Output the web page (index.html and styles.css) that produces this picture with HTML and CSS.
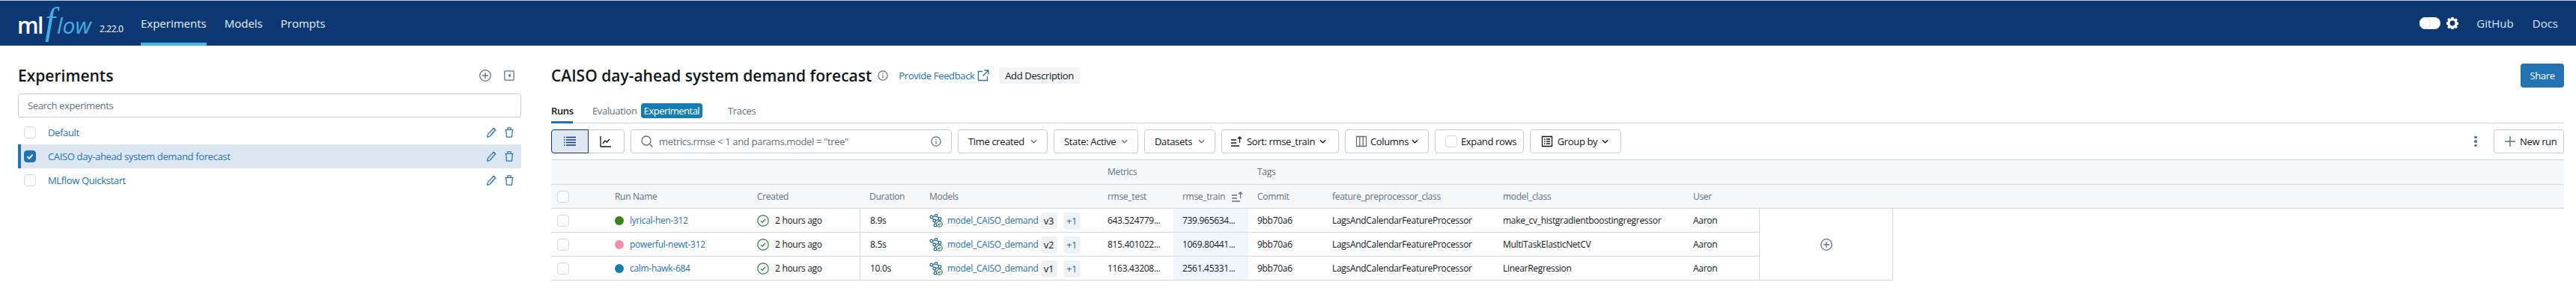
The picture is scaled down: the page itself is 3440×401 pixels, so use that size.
FILE: index.html
```html
<!DOCTYPE html>
<html lang="en">
<head>
<meta charset="utf-8">
<title>MLflow</title>
<link rel="stylesheet" href="styles.css">
</head>
<body>
<header class="topbar">
  <div class="logo"><span class="logo-ml">ml</span><span class="logo-f">f</span><span class="logo-low">low</span></div>
  <span class="version">2.22.0</span>
  <nav class="nav">
    <a class="nav-item active">Experiments</a>
    <a class="nav-item">Models</a>
    <a class="nav-item">Prompts</a>
  </nav>
  <div class="top-right">
    <span class="toggle"><span class="knob"></span></span>
    <svg class="gear" viewBox="0 0 16 16"><path fill="#fff" fill-rule="evenodd" d="M6.6 0h2.8l.4 2 1.3.6 1.8-1.1 2 2-1.1 1.8.6 1.3 2 .4v2.8l-2 .4-.6 1.3 1.1 1.8-2 2-1.800-1.100-1.300.6-.4 2H6.600l-.4-2-1.300-.6-1.800 1.100-2-2 1.100-1.800-.6-1.300-2-.4V6.600l2-.4.6-1.300L1.100 3.100l2-2 1.800 1.100 1.300-.6zM8 4.600a3.400 3.400 0 1 0 0 6.800 3.400 3.400 0 0 0 0-6.800z"/></svg>
    <a class="top-link github">GitHub</a>
    <a class="top-link">Docs</a>
  </div>
</header>
<div class="page">
  <aside class="sidebar">
    <div class="side-head">
      <h2 class="side-title">Experiments</h2>
      <svg class="icon16 grey" viewBox="0 0 16 16"><circle cx="8" cy="8" r="7.300"/><path d="M8 4v8M4 8h8"/></svg>
      <svg class="icon14 grey collapse" viewBox="0 0 16 16"><rect x="1" y="1" width="14" height="14" rx="1"/><path class="solid" d="M10 4.800v6.400L6.200 8z"/></svg>
    </div>
    <div class="side-search">Search experiments</div>
    <div class="exp-row"><span class="check"></span><a class="exp-name">Default</a><svg class="icon14 blue" viewBox="0 0 16 16"><path d="M11.500 1.500l3 2.500-8.500 10-4 1.500.5-4z"/></svg><svg class="icon14 blue" viewBox="0 0 16 16"><path d="M1.500 4h13M5.500 4V1h5v3M3 4l1 11h8l1-11"/></svg></div>
    <div class="exp-row selected"><span class="check on"><svg viewBox="0 0 16 16"><path d="M4 8.300l3 3 5-6"/></svg></span><a class="exp-name">CAISO day-ahead system demand forecast</a><svg class="icon14 blue" viewBox="0 0 16 16"><path d="M11.500 1.500l3 2.500-8.500 10-4 1.500.5-4z"/></svg><svg class="icon14 blue" viewBox="0 0 16 16"><path d="M1.500 4h13M5.500 4V1h5v3M3 4l1 11h8l1-11"/></svg></div>
    <div class="exp-row"><span class="check"></span><a class="exp-name">MLflow Quickstart</a><svg class="icon14 blue" viewBox="0 0 16 16"><path d="M11.500 1.500l3 2.500-8.500 10-4 1.500.5-4z"/></svg><svg class="icon14 blue" viewBox="0 0 16 16"><path d="M1.500 4h13M5.500 4V1h5v3M3 4l1 11h8l1-11"/></svg></div>
  </aside>
  <main class="main">
    <div class="title-row">
      <h1 class="title">CAISO day-ahead system demand forecast</h1>
      <svg class="icon14 grey info" viewBox="0 0 16 16"><circle cx="8" cy="8" r="7"/><path d="M8 7v5M8 4v1.600"/></svg>
      <a class="feedback">Provide Feedback</a>
      <svg class="icon16 blue ext" viewBox="0 0 16 16"><path d="M7 2.500H1.500v12h12V9M9.500 1h5.500v5.500M15 1L7.500 8.500"/></svg>
      <span class="add-desc">Add Description</span>
      <span class="share">Share</span>
    </div>
    <div class="tabs">
      <span class="tab active">Runs</span>
      <span class="tab eval">Evaluation</span><span class="badge">Experimental</span>
      <span class="tab traces">Traces</span>
    </div>
    <div class="toolbar">
      <div class="segment">
        <span class="seg on"><svg class="icon16 navy" viewBox="0 0 16 16"><path d="M0 2.500h1.500M3 2.500h13M0 6h1.500M3 6h13M0 9.500h1.500M3 9.500h13M0 13h1.500M3 13h13"/></svg></span>
        <span class="seg"><svg class="icon16 dark" viewBox="0 0 16 16"><path d="M1 1v14h14M4 11l3-4 2.500 2L13 5"/></svg></span>
      </div>
      <div class="run-search">
        <svg class="icon16 grey" viewBox="0 0 16 16"><circle cx="7" cy="7" r="6"/><path d="M11.500 11.500L15.500 15.500"/></svg>
        <span class="placeholder">metrics.rmse &lt; 1 and params.model = "tree"</span>
        <svg class="icon14 grey" viewBox="0 0 16 16"><circle cx="8" cy="8" r="7"/><path d="M8 7v5M8 4v1.600"/></svg>
      </div>
      <span class="btn w-time">Time created<svg class="chev light" viewBox="0 0 10 6"><path d="M1 1l4 4 4-4"/></svg></span>
      <span class="btn w-state">State: Active<svg class="chev light" viewBox="0 0 10 6"><path d="M1 1l4 4 4-4"/></svg></span>
      <span class="btn w-data">Datasets<svg class="chev light" viewBox="0 0 10 6"><path d="M1 1l4 4 4-4"/></svg></span>
      <span class="btn w-sort"><svg class="icon16 dark" viewBox="0 0 16 16"><path d="M1 6h7M1 10h7M1 14h11M12.500 10V2M10 4.500L12.500 2 15 4.500"/></svg>Sort: rmse_train<svg class="chev" viewBox="0 0 10 6"><path d="M1 1l4 4 4-4"/></svg></span>
      <span class="btn w-cols"><svg class="icon16 slate" viewBox="0 0 16 16"><path d="M1.500 1.500h13v13h-13zM5.800 1.500v13M10.200 1.500v13"/></svg>Columns<svg class="chev" viewBox="0 0 10 6"><path d="M1 1l4 4 4-4"/></svg></span>
      <span class="btn w-exp"><span class="check small"></span>Expand rows</span>
      <span class="btn w-group"><svg class="icon16 dark" viewBox="0 0 16 16"><path d="M1.500 1.500h13v13h-13zM4 5h1.500M7 5h5M4 8h1.500M7 8h5M4 11h1.500M7 11h5"/></svg>Group by<svg class="chev" viewBox="0 0 10 6"><path d="M1 1l4 4 4-4"/></svg></span>
      <span class="kebab"><i></i><i></i><i></i></span>
      <span class="btn new-run"><svg class="icon16 plus" viewBox="0 0 16 16"><path d="M8 1v14M1 8h14"/></svg>New run</span>
    </div>
    <div class="table">
      <div class="head-row group-row">
        <span class="c-metrics">Metrics</span>
        <span class="c-tags">Tags</span>
      </div>
      <div class="grid head-row">
        <span class="cell"><span class="check"></span></span>
        <span class="cell">Run Name</span><span class="cell">Created</span><span class="cell pad13">Duration</span><span class="cell">Models</span>
        <span class="cell pad12">rmse_test</span>
        <span class="cell pad12">rmse_train<svg class="icon16 slate sort-ic" viewBox="0 0 16 16"><path d="M1 6h7M1 10h7M1 14h11M12.500 10V2M10 4.500L12.500 2 15 4.500"/></svg></span>
        <span class="cell pad12">Commit</span><span class="cell pad12">feature_preprocessor_class</span><span class="cell pad12">model_class</span><span class="cell pad12">User</span>
      </div>
      <div class="body">
        <div class="rows">
          <div class="grid row">
            <span class="cell"><span class="check"></span></span>
            <span class="cell"><i class="dot green"></i><a class="link">lyrical-hen-312</a></span>
            <span class="cell"><svg class="icon18" viewBox="0 0 16 16"><circle cx="8" cy="8" r="7.200"/><path d="M5 8.200l2.200 2.200L11 6"/></svg>2 hours ago</span>
            <span class="cell pad13 divider">8.9s</span>
            <span class="cell"><svg class="model-ic" viewBox="0 0 18 18"><path d="M3 4l6-2 5 5-7 2zM3 4l4 5 1 5M14 7l-1 4"/><circle cx="3" cy="4" r="1.900"/><circle cx="9" cy="2" r="1.600"/><circle cx="14" cy="6.500" r="1.900"/><circle cx="7" cy="9" r="1.900"/><circle cx="8" cy="15" r="1.900"/><circle class="ok" cx="13.500" cy="13.500" r="3.800"/><path class="ok" d="M11.700 13.500l1.300 1.400 2.400-2.600"/></svg><a class="link">model_CAISO_demand</a><span class="ver">v3</span><span class="more">+1</span></span>
            <span class="cell pad12">643.524779...</span><span class="cell pad12 hl">739.965634...</span><span class="cell pad12">9bb70a6</span><span class="cell pad12">LagsAndCalendarFeatureProcessor</span><span class="cell pad12">make_cv_histgradientboostingregressor</span><span class="cell pad12">Aaron</span>
          </div>
          <div class="grid row">
            <span class="cell"><span class="check"></span></span>
            <span class="cell"><i class="dot pink"></i><a class="link">powerful-newt-312</a></span>
            <span class="cell"><svg class="icon18" viewBox="0 0 16 16"><circle cx="8" cy="8" r="7.200"/><path d="M5 8.200l2.200 2.200L11 6"/></svg>2 hours ago</span>
            <span class="cell pad13 divider">8.5s</span>
            <span class="cell"><svg class="model-ic" viewBox="0 0 18 18"><path d="M3 4l6-2 5 5-7 2zM3 4l4 5 1 5M14 7l-1 4"/><circle cx="3" cy="4" r="1.900"/><circle cx="9" cy="2" r="1.600"/><circle cx="14" cy="6.500" r="1.900"/><circle cx="7" cy="9" r="1.900"/><circle cx="8" cy="15" r="1.900"/><circle class="ok" cx="13.500" cy="13.500" r="3.800"/><path class="ok" d="M11.700 13.500l1.300 1.400 2.400-2.600"/></svg><a class="link">model_CAISO_demand</a><span class="ver">v2</span><span class="more">+1</span></span>
            <span class="cell pad12">815.401022...</span><span class="cell pad12 hl">1069.80441...</span><span class="cell pad12">9bb70a6</span><span class="cell pad12">LagsAndCalendarFeatureProcessor</span><span class="cell pad12">MultiTaskElasticNetCV</span><span class="cell pad12">Aaron</span>
          </div>
          <div class="grid row">
            <span class="cell"><span class="check"></span></span>
            <span class="cell"><i class="dot teal"></i><a class="link">calm-hawk-684</a></span>
            <span class="cell"><svg class="icon18" viewBox="0 0 16 16"><circle cx="8" cy="8" r="7.200"/><path d="M5 8.200l2.200 2.200L11 6"/></svg>2 hours ago</span>
            <span class="cell pad13 divider">10.0s</span>
            <span class="cell"><svg class="model-ic" viewBox="0 0 18 18"><path d="M3 4l6-2 5 5-7 2zM3 4l4 5 1 5M14 7l-1 4"/><circle cx="3" cy="4" r="1.900"/><circle cx="9" cy="2" r="1.600"/><circle cx="14" cy="6.500" r="1.900"/><circle cx="7" cy="9" r="1.900"/><circle cx="8" cy="15" r="1.900"/><circle class="ok" cx="13.500" cy="13.500" r="3.800"/><path class="ok" d="M11.700 13.500l1.300 1.400 2.400-2.600"/></svg><a class="link">model_CAISO_demand</a><span class="ver">v1</span><span class="more">+1</span></span>
            <span class="cell pad12">1163.43208...</span><span class="cell pad12 hl">2561.45331...</span><span class="cell pad12">9bb70a6</span><span class="cell pad12">LagsAndCalendarFeatureProcessor</span><span class="cell pad12">LinearRegression</span><span class="cell pad12">Aaron</span>
          </div>
        </div>
        <div class="add-col"><svg class="icon16 grey" viewBox="0 0 16 16"><circle cx="8" cy="8" r="7.300"/><path d="M8 4v8M4 8h8"/></svg></div>
      </div>
    </div>
  </main>
</div>
</body>
</html>
```
FILE: styles.css
```css
* { box-sizing: border-box; }
html, body { margin: 0; height: 401px; overflow: hidden; background: #fff; }
body { font: 13px/20px "Open Sans", "Noto Sans", sans-serif; letter-spacing: -.35px; color: #11171c; }
a { color: inherit; text-decoration: none; }
h1, h2 { margin: 0; font-weight: 600; letter-spacing: 0; }

.topbar { height: 61px; background: #0e3873; border-top: 1px solid #b9c9e0; display: flex; align-items: center; color: #fff; letter-spacing: 0; }
.logo { margin: 0 0 7px 23px; width: 104px; height: 50px; display: flex; align-items: baseline; white-space: nowrap; }
.logo-ml { font: 600 30px/50px "Open Sans", sans-serif; letter-spacing: -1.500px; color: #fff; }
.logo-f { font: italic 400 50px/50px "Liberation Serif", serif; color: #43aee8; margin-left: 3px; width: 16px; }
.logo-low { font: italic 500 30px/50px "Open Sans", sans-serif; color: #43aee8; letter-spacing: 0; }
.version { margin: 16px 0 0 6px; width: 31px; font-size: 12px; letter-spacing: -.4px; }
.nav { display: flex; gap: 24px; margin-left: 24px; height: 60px; }
.nav-item { font-size: 15px; line-height: 60px; color: #e6f0fa; height: 60px; }
.nav-item.active { border-bottom: 4px solid #43b5e8; }
.top-right { margin-left: auto; display: flex; align-items: center; margin-right: 24px; }
.toggle { width: 28px; height: 16px; border-radius: 8px; background: #fff; display: flex; }
.knob { width: 15px; height: 16px; border-radius: 8px; background: #fff; border: 1px solid #d5dfec; }
.gear { width: 16px; height: 16px; margin: 0 24px 0 8px; }
.top-link { font-size: 15px; color: #d6e6f5; }
.github { margin-right: 25px; }

.page { display: flex; padding-left: 24px; padding-right: 16px; }
.sidebar { width: 672px; flex: none; padding-top: 24px; }
.side-head { height: 32px; margin-bottom: 8px; display: flex; align-items: center; gap: 17px; padding-right: 9px; }
.side-title { font-size: 21px; line-height: 36px; margin-right: auto; }
.side-search { height: 32px; border: 1px solid #c4cdd5; border-radius: 4px; padding: 5px 12px; color: #5f7281; }
.exp-row { height: 32px; display: flex; align-items: center; padding-left: 8px; padding-right: 9px; gap: 10px; color: #2272b4; }
.side-search + .exp-row { margin-top: 4px; }
.exp-row.selected { background: #dce6f1; border-left: 4px solid #2272b4; padding-left: 4px; }
.exp-name { margin-left: 6px; margin-right: auto; }

.check { width: 16px; height: 16px; border: 1px solid #d1d9e1; border-radius: 4px; background: #fff; display: inline-block; flex: none; }
.check.on { background: #2272b4; border-color: #2272b4; display: flex; }
.check.on svg { fill: none; stroke: #fff; stroke-width: 2; }
.check.small { margin-right: 5px; }

.icon16, .icon14, .icon18, .chev, .model-ic { flex: none; fill: none; stroke-linejoin: round; }
.icon16 { width: 16px; height: 16px; stroke-width: 1.300; }
.icon14 { width: 14px; height: 14px; stroke-width: 1.400; }
.icon18 { width: 16px; height: 16px; stroke-width: 1.200; stroke: #277c43; margin-right: 8px; }
.grey { stroke: #5f7281; }
.blue { stroke: #2272b4; }
.navy { stroke: #0e3873; stroke-width: 1.600; }
.dark { stroke: #11171c; }
.slate { stroke: #5f7281; }
.solid { fill: #5f7281; stroke: none; }
.plus { stroke: #5f7281; stroke-width: 1.400; }

.main { flex: 1; margin-left: 40px; padding-top: 24px; min-width: 0; }
.title-row { height: 32px; display: flex; align-items: center; }
.title { font-size: 21px; line-height: 36px; }
.info { margin-left: 8px; }
.feedback { margin-left: 14px; color: #2272b4; }
.ext { margin-left: 3px; }
.add-desc { margin-left: 13px; width: 109px; height: 22px; line-height: 22px; background: #f2f4f6; text-align: center; border-radius: 4px; }
.share { margin-left: auto; width: 58px; height: 32px; line-height: 32px; background: #2272b4; color: #fff; text-align: center; border-radius: 4px; }

.tabs { margin-top: 21px; height: 27px; border-bottom: 1px solid #d1d9e1; display: flex; align-items: flex-start; }
.tab { color: #5f7281; height: 27px; line-height: 20px; }
.tab.active { color: #11171c; font-weight: 600; border-bottom: 3px solid #2272b4; width: 29px; margin-right: 26px; }
.tab.eval { width: 61px; }
.badge { margin: 0 0 0 4px; width: 82px; background: #177db0; color: #fff; height: 20px; line-height: 20px; border-radius: 4px; text-align: center; letter-spacing: -.5px; }
.traces { margin-left: 34px; }

.toolbar { margin-top: 8px; height: 32px; display: flex; gap: 8px; align-items: stretch; }
.segment { display: flex; width: 98px; }
.seg { flex: 1; display: flex; align-items: center; justify-content: center; border: 1px solid #c4cdd5; border-left: 0; border-radius: 0 4px 4px 0; }
.seg.on { background: #dfe8f2; border: 1px solid #0e3873; border-radius: 4px 0 0 4px; }
.run-search { width: 429px; border: 1px solid #c4cdd5; border-radius: 4px; display: flex; align-items: center; padding: 0 13px; gap: 8px; }
.placeholder { flex: 1; color: #5f7281; }
.btn { border: 1px solid #c4cdd5; border-radius: 4px; display: flex; align-items: center; padding: 0 13px; gap: 4px; white-space: nowrap; justify-content: space-between; }
.chev { width: 9px; height: 6px; stroke: #11171c; stroke-width: 1.500; }
.chev.light { stroke: #5f7281; }
.w-time { width: 120px; }
.w-state { width: 113px; }
.w-data { width: 95px; }
.w-sort { width: 157px; padding: 0 16px 0 11px; }
.w-cols { width: 112px; padding: 0 16px 0 13px; }
.w-exp { width: 119px; justify-content: flex-start; gap: 0; }
.w-group { width: 122px; padding: 0 16px 0 14px; }
.kebab { margin-left: auto; width: 16px; display: flex; flex-direction: column; align-items: center; justify-content: center; gap: 2px; margin-right: 8px; }
.kebab i { width: 3.500px; height: 3.500px; border-radius: 50%; background: #5f7281; }
.new-run { width: 94px; gap: 5px; padding: 0 10px 0 13px; }

.table { margin-top: 8px; border-top: 1px solid #d1d9e1; font-size: 12px; letter-spacing: -.3px; }
.head-row { height: 32px; background: #f6f7f9; color: #5f7281; border-bottom: 1px solid #d1d9e1; }
.group-row { height: 33px; display: flex; align-items: center; }
.c-metrics { margin-left: 743px; width: 200px; }
.grid { display: grid; grid-template-columns: 77px 190px 145px 85px 234px 100px 100px 100px 228px 254px 100px; }
.cell { display: flex; align-items: center; padding-left: 8px; white-space: nowrap; overflow: hidden; height: 100%; }
.pad12 { padding-left: 12px; }
.pad13 { padding-left: 13px; }
.sort-ic { margin-left: 8px; }
.body { display: flex; }
.rows { width: 1613px; flex: none; }
.row { height: 32px; border-bottom: 1px solid #d1d9e1; }
.divider { border-left: 1px solid #d1d9e1; }
.hl { background: #f0f6fc; }
.dot { width: 12px; height: 12px; border-radius: 50%; margin-right: 8px; flex: none; }
.green { background: #3a8518; }
.pink { background: #f28fa8; }
.teal { background: #177db0; }
.link { color: #2272b4; }
.model-ic { width: 18px; height: 18px; stroke: #1d6aa8; stroke-width: 1.200; margin-right: 6px; }
.model-ic .ok { stroke: #277c43; fill: #fff; }
.model-ic path.ok { fill: none; }
.model-ic circle { fill: #fff; }
.ver { margin-left: 3px; width: 22px; height: 22px; line-height: 22px; text-align: center; background: #eef0f2; border-radius: 4px; font-size: 13px; }
.more { margin-left: 8px; width: 23px; height: 22px; line-height: 22px; text-align: center; background: #eef2f5; color: #2272b4; border-radius: 4px; font-size: 13px; }
.add-col { width: 179px; border-left: 1px solid #d1d9e1; border-right: 1px solid #d1d9e1; border-bottom: 1px solid #d1d9e1; display: flex; align-items: center; justify-content: center; }
```
